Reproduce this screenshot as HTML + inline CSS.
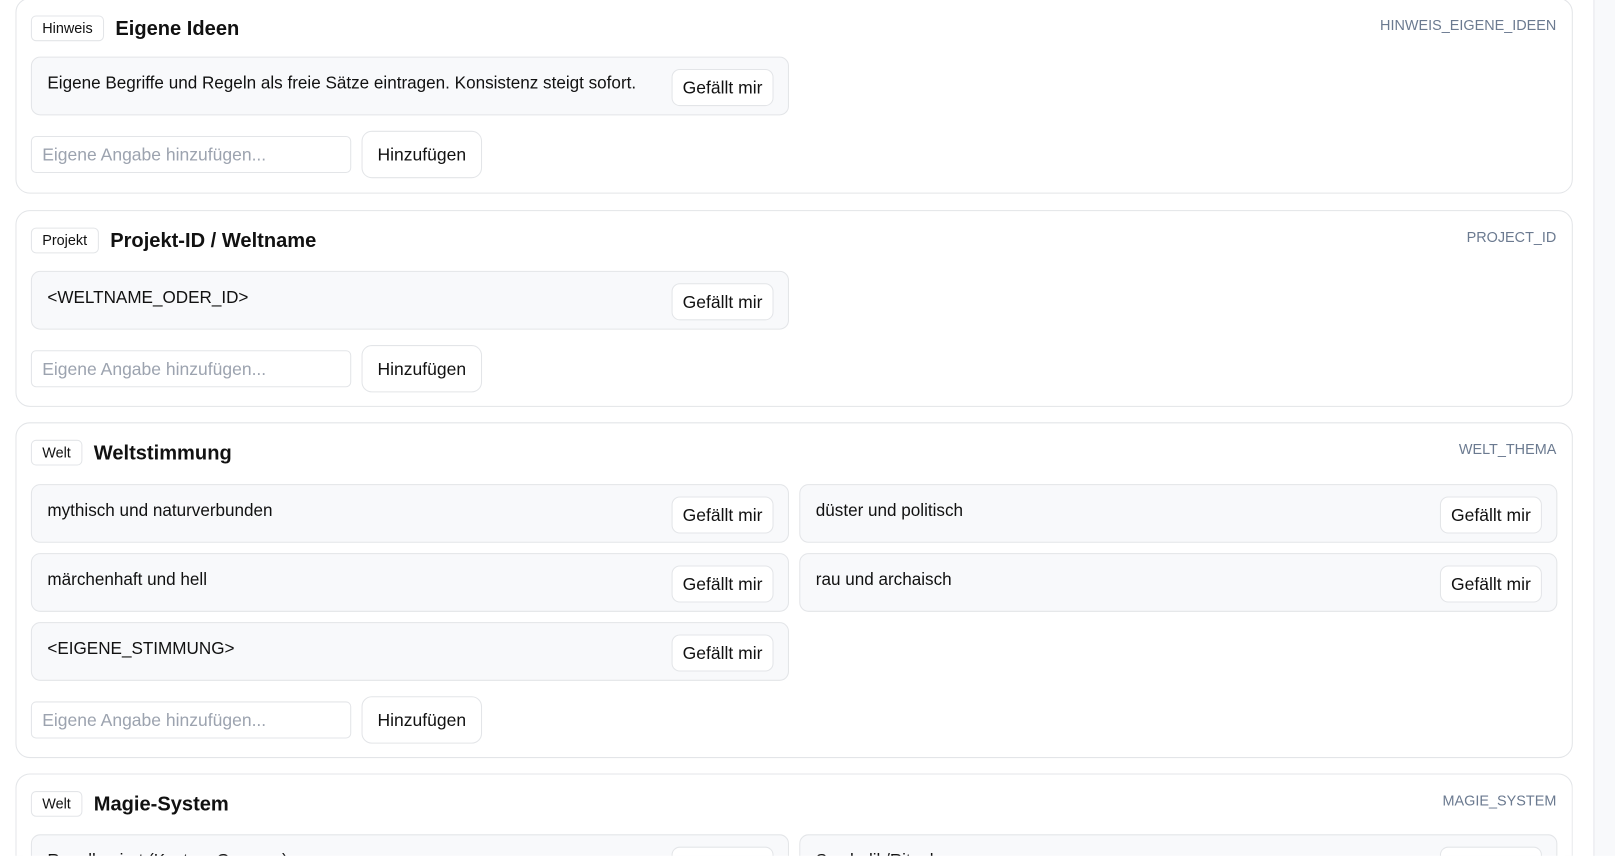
<!DOCTYPE html>
<html><head><meta charset="utf-8"><style>
*{box-sizing:border-box}
html,body{margin:0;width:1615px;height:856px;overflow:hidden;background:#fff}
#w{position:absolute;left:0;top:0;width:1568px;height:831px;overflow:hidden;transform:scale(1.03);transform-origin:0 0;font-family:"Liberation Sans",sans-serif;color:#111}
.side{position:absolute;left:1547px;top:0;width:21px;height:831px;background:#f8f9fb;border-left:1px solid #e5e7eb}
.card{position:absolute;left:15px;width:1512px;border:1px solid #e3e5e8;border-radius:14px;background:#fff}
.badge{position:absolute;left:14px;top:16px;height:25px;padding:0 10px;border:1px solid #e3e5e8;border-radius:5px;font-size:14px;line-height:23px}
.title{position:absolute;top:15px;font-size:19.5px;font-weight:bold;line-height:28px}
.key{position:absolute;right:15px;top:17px;font-size:14px;color:#6b7a90}
.opt{position:absolute;width:736px;height:57px;background:#f8f9fb;border:1px solid #e3e5e8;border-radius:9px}
.opt span{position:absolute;left:15px;top:15px;font-size:16.6px}
.opt b{position:absolute;right:14px;top:11px;height:36px;width:99px;border:1px solid #e3e5e8;border-radius:8px;background:#fff;font-weight:normal;font-size:17px;line-height:36px;text-align:center}
.inp{position:absolute;left:14px;width:311px;height:36px;border:1px solid #e3e5e8;border-radius:5px;color:#9ca3af;font-size:17px;line-height:36px;padding-left:10px}
.btn{position:absolute;left:335px;width:117px;height:46px;border:1px solid #e3e5e8;border-radius:10px;font-size:17px;line-height:46px;text-align:center}
</style></head><body><div id="w">
<div class="side"></div>

<div class="card" style="top:-2px;height:190px">
<div class="badge">Hinweis</div><div class="title" style="left:96px">Eigene Ideen</div><div class="key">HINWEIS_EIGENE_IDEEN</div>
<div class="opt" style="left:14px;top:56px"><span>Eigene Begriffe und Regeln als freie Sätze eintragen. Konsistenz steigt sofort.</span><b>Gefällt mir</b></div>
<div class="inp" style="top:133px">Eigene Angabe hinzufügen...</div><div class="btn" style="top:128px">Hinzufügen</div>
</div>

<div class="card" style="top:204px;height:191px">
<div class="badge">Projekt</div><div class="title" style="left:91px">Projekt-ID / Weltname</div><div class="key">PROJECT_ID</div>
<div class="opt" style="left:14px;top:58px"><span>&lt;WELTNAME_ODER_ID&gt;</span><b>Gefällt mir</b></div>
<div class="inp" style="top:135px">Eigene Angabe hinzufügen...</div><div class="btn" style="top:130px">Hinzufügen</div>
</div>

<div class="card" style="top:410px;height:326px">
<div class="badge">Welt</div><div class="title" style="left:75px">Weltstimmung</div><div class="key">WELT_THEMA</div>
<div class="opt" style="left:14px;top:59px"><span>mythisch und naturverbunden</span><b>Gefällt mir</b></div>
<div class="opt" style="left:760px;top:59px"><span>düster und politisch</span><b>Gefällt mir</b></div>
<div class="opt" style="left:14px;top:126px"><span>märchenhaft und hell</span><b>Gefällt mir</b></div>
<div class="opt" style="left:760px;top:126px"><span>rau und archaisch</span><b>Gefällt mir</b></div>
<div class="opt" style="left:14px;top:193px"><span>&lt;EIGENE_STIMMUNG&gt;</span><b>Gefällt mir</b></div>
<div class="inp" style="top:270px">Eigene Angabe hinzufügen...</div><div class="btn" style="top:265px">Hinzufügen</div>
</div>

<div class="card" style="top:751px;height:80px;border-bottom:none;border-radius:14px 14px 0 0;overflow:hidden">
<div class="badge">Welt</div><div class="title" style="left:75px">Magie-System</div><div class="key">MAGIE_SYSTEM</div>
<div class="opt" style="left:14px;top:58px"><span>Regelbasiert (Kosten, Grenzen)</span><b>Gefällt mir</b></div>
<div class="opt" style="left:760px;top:58px"><span>Symbolik/Rituale</span><b>Gefällt mir</b></div>
</div>
</div></body></html>
